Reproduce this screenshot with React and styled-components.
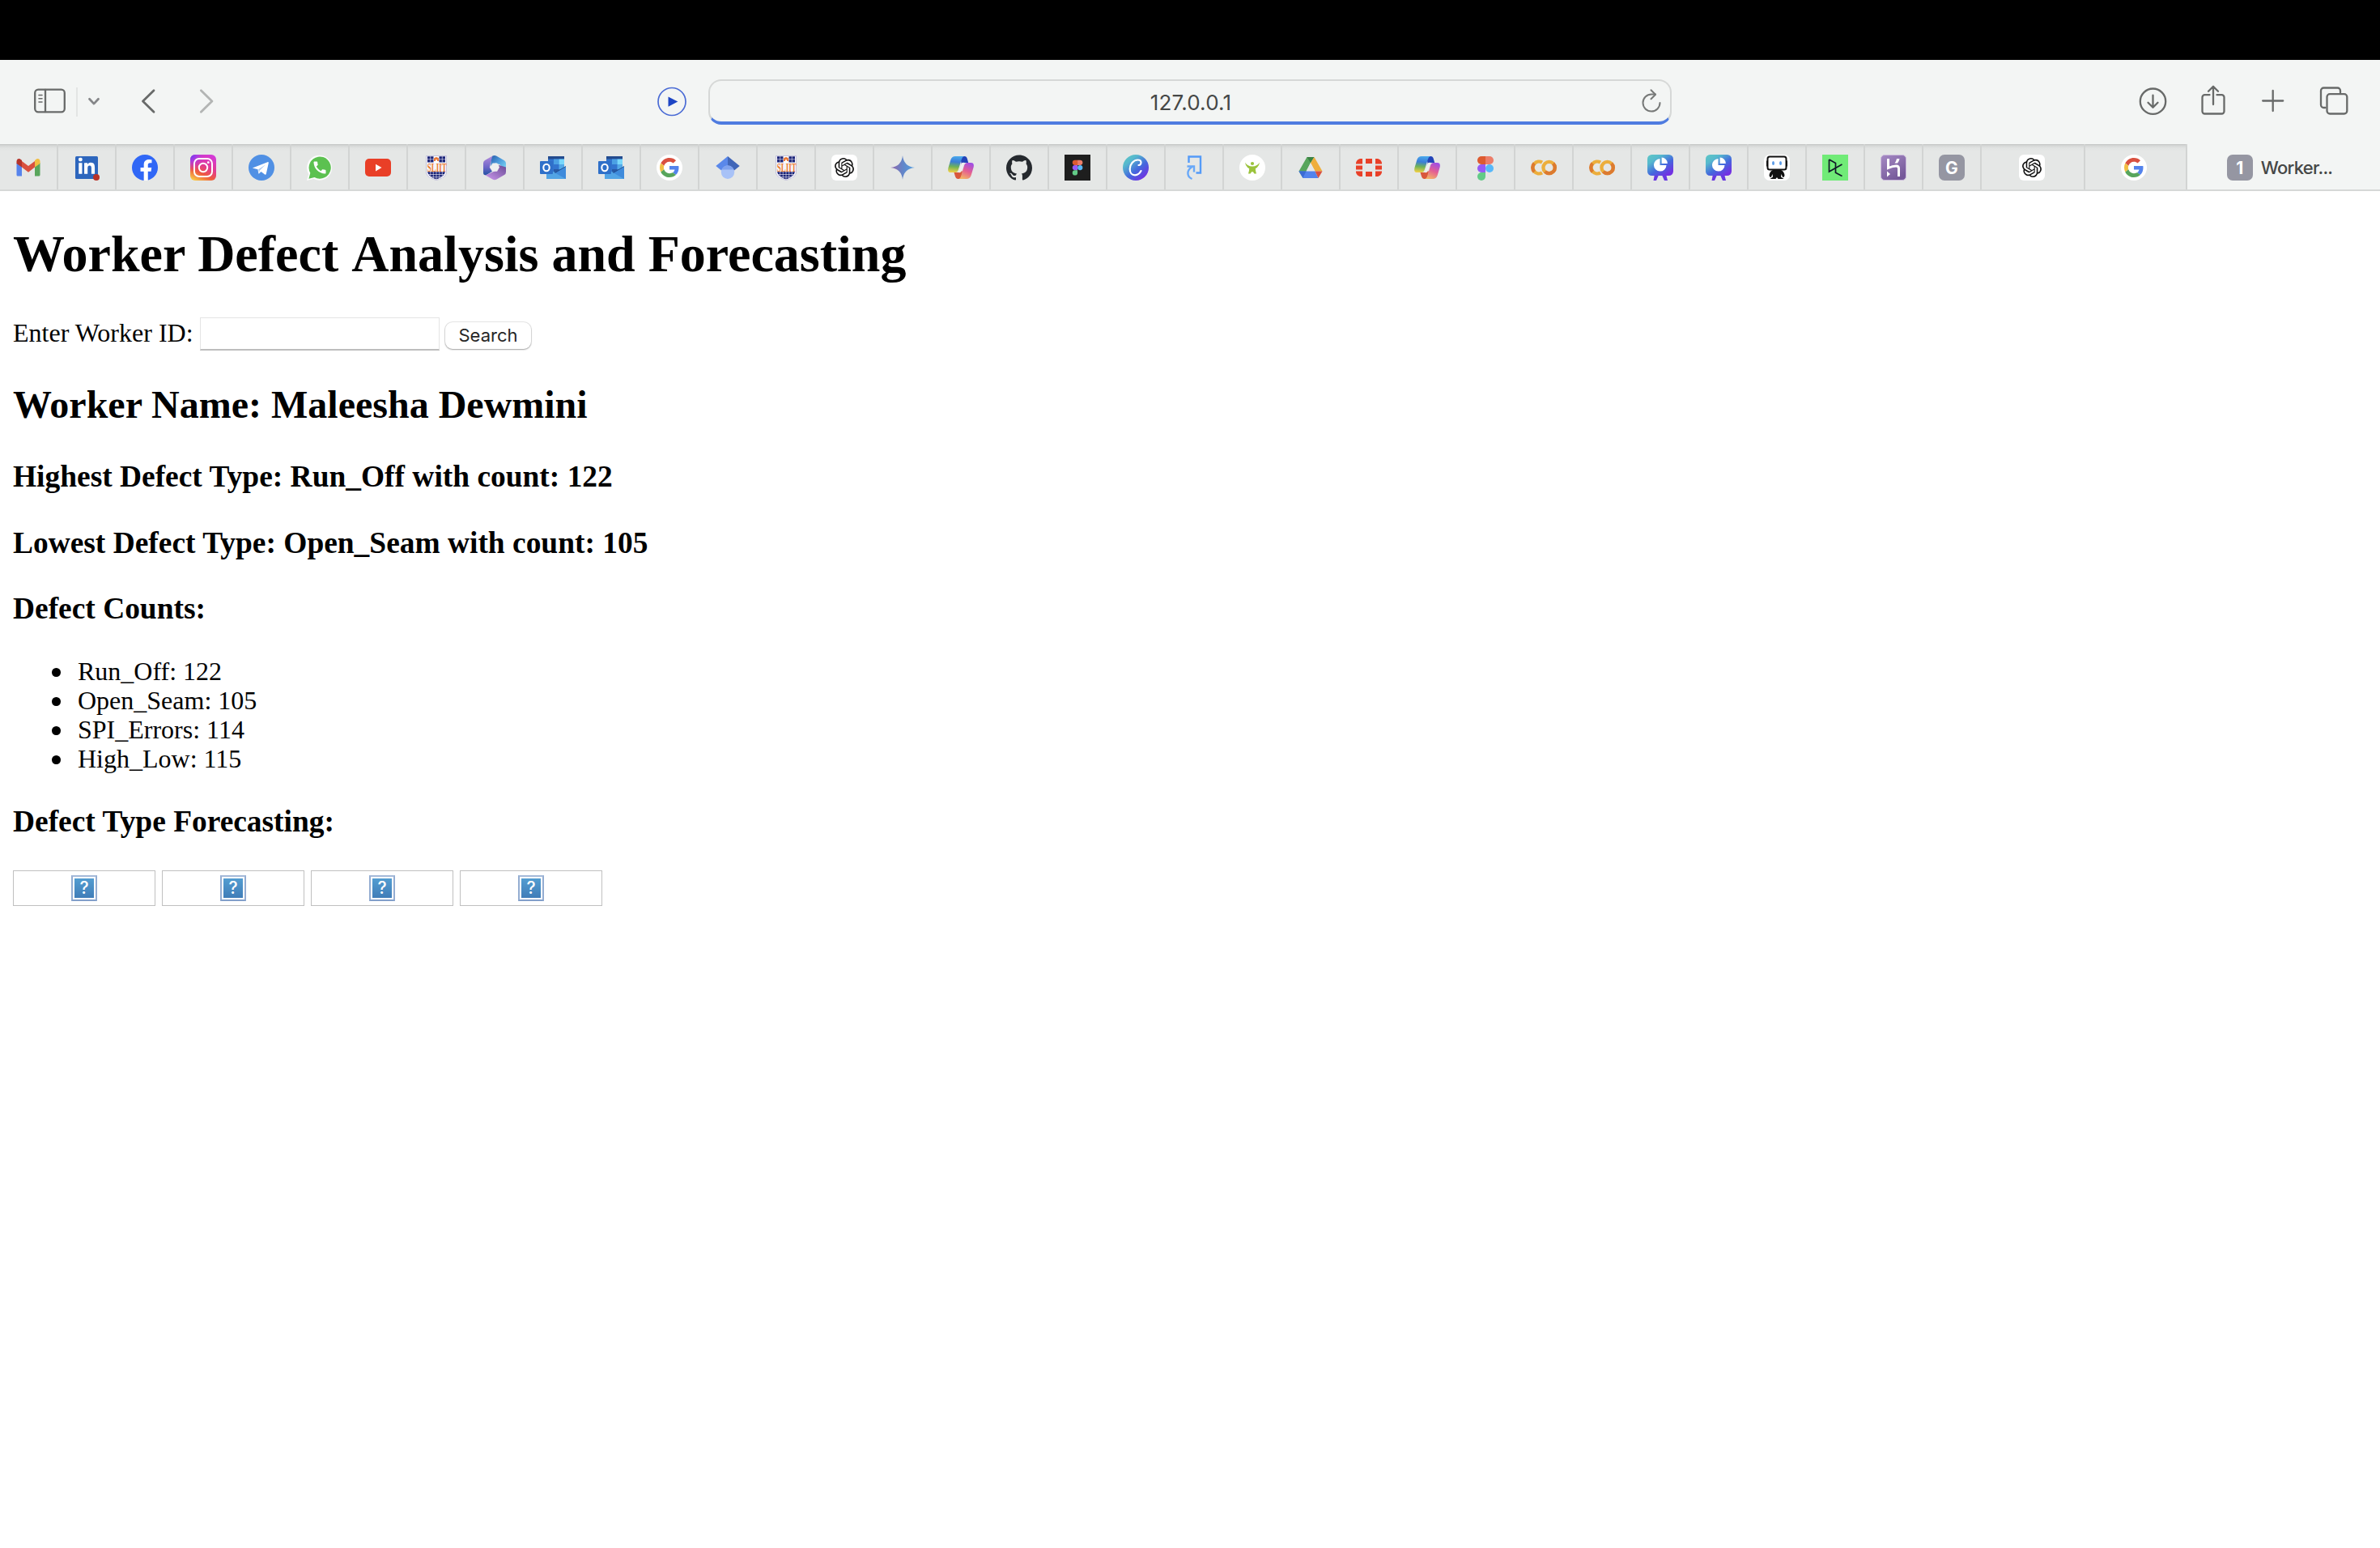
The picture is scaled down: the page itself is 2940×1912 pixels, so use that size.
import React from "react";
import styled, { createGlobalStyle } from "styled-components";
import { SiOpenai, SiGithub } from "react-icons/si";
import { FaFacebookF, FaLinkedinIn } from "react-icons/fa";
import { MdCall } from "react-icons/md";

const Global = createGlobalStyle`
  body { margin: 0; background: #fff; color: #000; font-family: "Liberation Serif", "Times New Roman", serif; }
  * { box-sizing: border-box; }
`;

/* ---------- browser chrome ---------- */
const Notch = styled.div`height: 74px; background: #000;`;
const Toolbar = styled.header`
  display: flex; align-items: center; height: 104px; background: #f3f5f4;
  padding: 0 37px 0 40px; color: #686a69;
`;
const Group = styled.div`
  display: flex; align-items: center; flex: none; width: ${(p) => p.$w}px; margin-left: ${(p) => (p.$end ? "auto" : "0")};
`;
const Slot = styled.span`
  display: flex; flex: none; width: ${(p) => p.$w}px; height: 44px; margin-left: ${(p) => p.$ml || 0}px;
  svg { display: block; }
`;
const Rule = styled.span`width: 2px; height: 36px; margin-left: 12px; background: #e3e5e4;`;
const Address = styled.div`
  display: flex; align-items: center; flex: none; width: 1190px; height: 56px; margin: 0 0 0 26px;
  border: 2px solid #d6d8d7; border-bottom: 4px solid #4f7ce0; border-radius: 16px;
  padding-right: 8px;
`;
const Host = styled.span`
  flex: 1; text-align: center; padding: 4px 0 0 38px; color: #454746;
  font: 26px/32px Inter, "Liberation Sans", sans-serif; letter-spacing: 0.2px;
`;

const TabStrip = styled.nav`
  display: flex; height: 58px; background: #e5e7e6; border-bottom: 2px solid #d6d8d7;
`;
const Tab = styled.div`
  display: flex; align-items: center; justify-content: center; flex: ${(p) => (p.$grow ? "1" : "none")};
  width: ${(p) => p.$w || 72}px; padding: 2px ${(p) => p.$pr || 0}px 0 0;
  background: ${(p) => (p.$grow ? "#f3f5f4" : "linear-gradient(#c2c4c3 0, #d6d8d7 2px, #e1e3e2 5px, #e5e7e6 9px)")};
  border-right: ${(p) => (p.$grow ? "0" : "2px solid #d2d4d3")};
  svg { display: block; }
`;
const TabTitle = styled.span`
  margin-left: 10px; color: #454746; font: 500 22px/30px Inter, "Liberation Sans", sans-serif;
  font-weight: 450; letter-spacing: -0.7px; padding-right: 10px;
`;
const Badge = styled.span`
  width: 32px; height: 32px; border-radius: 7px; background: #9596a2; color: #fff; text-align: center;
  font: 700 21px/33px Inter, "Liberation Sans", sans-serif;
`;

/* ---------- page ---------- */
const Page = styled.main`padding: 42px 16px 0;`;
const Title = styled.h1`margin: 0; font-size: 64px; line-height: 71px;`;
const Word = styled.span`margin-left: 0.1px;`;
const Form = styled.form`display: flex; height: 42px; margin: 43px 0 0;`;
const Label = styled.label`font-size: 32px; line-height: 36px; padding-top: 1px; width: 231px; white-space: nowrap;`;
const Field = styled.input`
  width: 296px; height: 41px; margin: 0; padding: 4px; border: 1px solid #e4e4e4; border-bottom: 2px solid #bdbdbd;
  background: #fff; outline: 0; border-radius: 0; font-size: 22px;
`;
const Button = styled.button`
  width: 106px; height: 33px; margin: 6px 0 0 7px; padding: 0; border: 0; border-radius: 9px; background: #fff;
  box-shadow: 0 0 0 1px rgba(0,0,0,.09), 0 1px 2px rgba(0,0,0,.3); color: #262626;
  font: 22px/33px Inter, "Liberation Sans", sans-serif;
`;
const Name = styled.h2`margin: 39px 0 42px; font-size: 48px; line-height: 53px;`;
const Heading = styled.h3`margin: 0 0 ${(p) => p.$mb || 41}px; font-size: 37.44px; line-height: 41px;`;
const List = styled.ul`margin: 0 0 39px; padding: 0 0 0 48px; list-style: none;`;
const Item = styled.li`
  display: flex; align-items: center; font-size: 32px; line-height: 36px;
  &::before { content: ""; width: 10.6px; height: 10.6px; margin: 3px 21.4px 0 0; border-radius: 50%; background: #000; }
`;
const Charts = styled.div`display: flex; gap: 8px;`;
const Missing = styled.div`
  display: flex; align-items: center; justify-content: center; width: 176px; height: 44px; border: 1px solid #c0c0c0;
`;
const Unknown = styled.span`
  width: 32px; height: 32px; border: 2px solid; padding: 2px; background: #fff;
  border-color: #a5bad9 #94add2 #829fca;
  &::before {
    content: "?"; display: block; height: 24px; background: linear-gradient(#539dd1, #407db8); color: #fff;
    text-align: center; font: 500 21px/24px Inter, "Liberation Sans", sans-serif;
  }
`;

/* ---------- favicons ---------- */
const I = ({ children }) => <svg width="32" height="32" viewBox="0 0 32 32">{children}</svg>;

const Gmail = () => (
  <I>
    <path d="M1.500 10v15a1.500 1.500 0 0 0 1.500 1.500h5V14z" fill="#5784ec" />
    <path d="M30.500 10v15a1.500 1.500 0 0 1-1.500 1.500h-5V14z" fill="#59a65c" />
    <path d="M8 8l8 6 8-6v7.500l-8 6.200-8-6.200z" fill="#d9503f" />
    <path d="M1.500 8.500c0-3.500 3.300-4.200 5.200-2.600L8 7v8.600L1.500 11z" fill="#b5342a" />
    <path d="M30.500 8.500c0-3.500-3.300-4.200-5.200-2.600L24 7v8.600L30.500 11z" fill="#f1be42" />
  </I>
);
const LinkedIn = () => (
  <I>
    <rect x="2" y="2" width="28" height="28" rx="1.500" fill="#2d66bd" />
    <FaLinkedinIn x="4.500" y="3.500" size="23" color="#fff" />
    <circle cx="28" cy="28" r="4" fill="#b93227" />
  </I>
);
const Facebook = () => (
  <I>
    <circle cx="16" cy="16" r="16" fill="#3067f6" />
    <FaFacebookF x="4.500" y="6" size="26" color="#fff" />
  </I>
);
const Instagram = () => (
  <I>
    <defs>
      <linearGradient id="ig" x1="0.200" y1="1" x2="0.700" y2="0"><stop stopColor="#f8c644" /><stop offset=".3" stopColor="#ee5b3d" /><stop offset=".6" stopColor="#e23a92" /><stop offset="1" stopColor="#d33ad6" /></linearGradient>
      <radialGradient id="ig2" cx="0" cy="0" r=".65"><stop stopColor="#5b3cf5" /><stop offset=".4" stopColor="#a13cf0" stopOpacity=".8" /><stop offset="1" stopColor="#d33ad6" stopOpacity="0" /></radialGradient>
    </defs>
    <rect width="32" height="32" rx="6" fill="url(#ig)" /><rect width="32" height="32" rx="6" fill="url(#ig2)" />
    <rect x="5" y="5" width="22" height="22" rx="6" fill="none" stroke="#fff" strokeWidth="2" />
    <circle cx="16" cy="16" r="5.200" fill="none" stroke="#fff" strokeWidth="2" /><circle cx="22.300" cy="9.700" r="1.400" fill="#fff" />
  </I>
);
const Telegram = () => (
  <I>
    <circle cx="16" cy="16" r="16" fill="#5090e4" />
    <path d="M5.500 16.200 23.500 9.200c.9-.3 1.500.2 1.200 1.500l-2.900 13.100c-.2 1-.9 1.200-1.700.7l-4.600-3.400-2.300 2.200c-.5.500-.8.300-.9-.3l-.8-4.700-5.700-1.500c-1-.3-1-.4-.3-.6z" fill="#fff" />
    <path d="M12.200 18.300 21.200 12.300 13.800 19.500 13 23z" fill="#a9c8f0" />
  </I>
);
const WhatsApp = () => (
  <I>
    <path d="M0 32 2.200 24A15.500 15.500 0 1 1 8.500 30z" fill="#fff" opacity=".85" />
    <path d="M2.400 29.800 4.300 22.700A13.600 13.600 0 1 1 9.500 27.900z" fill="#5cc150" />
    <MdCall x="6" y="6" size="20" color="#fff" />
  </I>
);
const YouTube = () => (
  <I><rect y="5" width="32" height="22" rx="5" fill="#e93f27" /><path d="M13 11.800v8.600l7.500-4.300z" fill="#fff" /></I>
);
const Sliit = () => (
  <I>
    <path d="M3.500 1.500h25V23q-2 6-12.400 8.500Q5.500 29 3.500 23z" fill="#f5f4fa" stroke="#b9b8d6" strokeWidth=".8" />
    <path d="M5 2.300h22V9.500H5zM5 21.300h22q-1.500 6.500-11 9.200Q6.500 28 5 21.300z" fill="#1a2377" />
    <path d="M8.700 2v7.500M23.300 2v7.500M5 5.700h22.500M8.700 21v9M12.300 21v10M16 21v10M19.700 21v10M23.300 21v9M5 24.500h22.500M7 27.700h18" stroke="#eeedf6" strokeWidth=".6" />
    <rect x="12.500" y="2" width="7" height="8" fill="#fff" /><path d="M13 8V4.500q3-3 6 0V8h-2V6.200h-2V8z" fill="#ea7b3a" />
    <text transform="translate(4.700 20.500) scale(.6 1)" fontFamily="Liberation Serif, serif" fontWeight="700" fontSize="15" fill="#ed7d31">SLIIT</text>
  </I>
);
const M365 = () => (
  <I>
    <defs>
      <linearGradient id="ma" x1="0" y1="0" x2="0" y2="1"><stop stopColor="#b58bdc" /><stop offset=".6" stopColor="#6d66c8" /><stop offset="1" stopColor="#2352a3" /></linearGradient>
      <linearGradient id="mb" x1="0" y1="0" x2="1" y2="1"><stop stopColor="#285daa" /><stop offset=".45" stopColor="#4c9bdc" /><stop offset="1" stopColor="#83e0f8" /></linearGradient>
      <linearGradient id="mc" x1="0" y1="1" x2="1" y2="0"><stop stopColor="#cf9cf0" /><stop offset="1" stopColor="#6a4a96" /></linearGradient>
    </defs>
    <path d="M13.500 1.500 4 7Q2 8.300 2 10.500v11.800Q2 26 6 25l7-4.200-3.200-5z" fill="url(#ma)" />
    <path d="M13.500 1.500Q16 .3 18.500 1.700L28 7.200q2 1.300 2 3.500v9L22 12l-5-1.500-5.500 4q-.5-8 2-13z" fill="url(#mb)" />
    <path d="M30 15.500v6Q30 24 28 25l-9.500 5.500Q16 31.800 13.500 30.500L3 24.500q2 1.200 4.500-.2L17 20l4.500-7z" fill="url(#mc)" />
    <path d="M13.500 10.500h5.600l2.900 5-2.900 5.200h-5.600l-2.900-5.200z" fill="#eef0f0" />
  </I>
);
const Outlook = () => (
  <I>
    <rect x="10" y="2" width="20" height="22" fill="#3274cf" /><rect x="10" y="2" width="20" height="3.500" fill="#234b8e" />
    <path d="M17 5.500h6.500V12H17z" fill="#4ba0e4" /><path d="M23.500 5.500H30V12h-6.500z" fill="#79d7fb" /><path d="M23.500 12H30v6h-6.500z" fill="#54a9e8" /><path d="M17 18h6.500v5H17z" fill="#285aa5" />
    <path d="M32 14.500V30H8V17l13 6z" fill="#52a4e5" /><path d="M32 15v15L18.500 22.500z" fill="#3f8bdb" /><path d="M32 14.500 18.500 22.500" stroke="#224f93" />
    <rect y="8" width="16" height="16" rx="1" fill="#2f70c9" /><ellipse cx="8" cy="16" rx="3.700" ry="4.300" fill="none" stroke="#fff" strokeWidth="2.100" />
  </I>
);
const Google = () => (
  <I>
    <circle cx="16" cy="16" r="16" fill="#fff" />
    <svg x="4" y="4" width="24" height="24" viewBox="0 0 48 48">
      <path fill="#d9503f" d="M24 9.500c3.540 0 6.710 1.220 9.210 3.600l6.850-6.850C35.900 2.380 30.470 0 24 0 14.620 0 6.510 5.380 2.560 13.220l7.980 6.190C12.430 13.720 17.740 9.500 24 9.500z" />
      <path fill="#5383ec" d="M46.980 24.550c0-1.570-.15-3.090-.38-4.550H24v9.020h12.940c-.58 2.960-2.260 5.480-4.780 7.180l7.730 6c4.510-4.180 7.090-10.360 7.090-17.650z" />
      <path fill="#f1be42" d="M10.530 28.590c-.48-1.450-.76-2.990-.76-4.590s.27-3.140.76-4.590l-7.980-6.190C.92 16.460 0 20.120 0 24c0 3.880.92 7.540 2.560 10.780l7.970-6.190z" />
      <path fill="#58a55c" d="M24 48c6.480 0 11.930-2.130 15.890-5.810l-7.730-6c-2.150 1.450-4.920 2.300-8.160 2.300-6.260 0-11.570-4.220-13.470-9.910l-7.980 6.190C6.510 42.620 14.620 48 24 48z" />
    </svg>
  </I>
);
const Scholar = () => (
  <I>
    <path d="M16 2 1.300 14 8 19.500h8z" fill="#5a88ea" /><path d="M16 2 30.700 14 24 19.500h-8z" fill="#4166b8" />
    <circle cx="16" cy="21.800" r="8.200" fill="#a8c2f7" /><path d="M8.500 18.500a8.200 8.200 0 0 1 15 0z" fill="#7fa2ee" />
  </I>
);
const ChatGPT = () => (
  <I><rect width="32" height="32" rx="6" fill="#fff" /><SiOpenai x="4" y="4" size="24" color="#111" /></I>
);
const Gemini = () => (
  <I>
    <defs><linearGradient id="ge"><stop offset=".1" stopColor="#8a6bb0" /><stop offset=".5" stopColor="#6385c8" /><stop offset="1" stopColor="#53a0e2" /></linearGradient></defs>
    <path d="M16 1q1.300 13.500 15 15-13.700 1.500-15 15-1.300-13.500-15-15Q14.700 14.500 16 1z" fill="url(#ge)" />
  </I>
);
const Copilot = () => (
  <I>
    <defs>
      <linearGradient id="ca" x1=".5" y1="0" x2=".4" y2="1"><stop stopColor="#4aa9ec" /><stop offset=".35" stopColor="#3a7dd8" /><stop offset=".65" stopColor="#6fb257" /><stop offset="1" stopColor="#efd047" /></linearGradient>
      <linearGradient id="cb" x1=".7" y1="0" x2=".3" y2="1"><stop stopColor="#a04ee4" /><stop offset=".5" stopColor="#e45f92" /><stop offset="1" stopColor="#f3b465" /></linearGradient>
    </defs>
    <path d="M15 2h5.500q2.500 0 3.300 3l1.400 5h-4.500q-2.500 0-3.700 3z" fill="#2243b8" />
    <path d="M9 2h11q-2.300.5-3.200 4l-4 12.500Q11.700 22 9 22H3.500Q-1 22 .5 16l3-10Q5 2 9 2z" fill="url(#ca)" />
    <path d="M7.500 22H13q2 0 3-3l2 2-2 9h-3.500Q10 30 9 27z" fill="#d9583c" />
    <path d="M23 30H13q2.500-.5 3.300-4l3.700-12.500Q21 10 24 10h4.500Q33 10 31.500 16l-3 10Q27 30 23 30z" fill="url(#cb)" />
    <path d="M17 10.200q1.500-.9 4-.2-1.500 1-2 3.200L16.500 21q-.8 1.500-3.800 1 .8-1 1.300-2.500z" fill="#edf0ef" />
  </I>
);
const GitHub = () => <I><SiGithub size="32" color="#25292e" /></I>;
const FigmaShape = () => (
  <>
    <path d="M16 1H11a5 5 0 0 0 0 10h5z" fill="#dd5b30" /><path d="M16 1h5a5 5 0 0 1 0 10h-5z" fill="#ec7d69" />
    <path d="M16 11h-5a5 5 0 0 0 0 10h5z" fill="#955bf6" /><circle cx="21" cy="16" r="5" fill="#58b8f9" />
    <path d="M11 21h5v5a5 5 0 1 1-5-5z" fill="#62cb87" />
  </>
);
const Figma = () => <I><g transform="translate(0 1)"><FigmaShape /></g></I>;
const FigmaDark = () => <I><rect width="32" height="32" fill="#1e1e1e" /><g transform="translate(6 6) scale(.63)"><FigmaShape /></g></I>;
const CanvaFill = ({ id }) => (
  <defs><linearGradient id={id} x1=".1" y1=".1" x2=".8" y2=".95"><stop stopColor="#5bc2c8" /><stop offset=".2" stopColor="#56b9cd" /><stop offset=".6" stopColor="#4468dd" /><stop offset="1" stopColor="#7330e2" /></linearGradient></defs>
);
const Canva = () => (
  <I>
    <CanvaFill id="cv" /><circle cx="16" cy="16" r="16" fill="url(#cv)" />
    <path d="M19.500 13c2 .2 3-1.700 3-3.300 0-2-1.500-3.200-4-3.200-5.500 0-9.800 5.500-9.800 11.200 0 4.600 2.600 7.600 6.300 7.600 3.300 0 6-2.200 7.500-5.200" fill="none" stroke="#fff" strokeWidth="2.200" strokeLinecap="round" />
  </I>
);
const Redirect = () => (
  <I>
    <g transform="translate(4 0)" fill="none">
      <path d="M5.500 10V2.500h14.500v20H14.500" stroke="#549bf8" strokeWidth="2.400" />
      <path d="M9.500 30q-6-2.500-5-8.500.8-4 6.500-7.500M3.500 14.500h8.500V21.500" stroke="#68a8f8" strokeWidth="2.400" />
    </g>
  </I>
);
const Person = () => (
  <I>
    <circle cx="16" cy="16" r="16" fill="#fff" /><circle cx="16" cy="11" r="2.100" fill="#9bc33c" />
    <path d="M7 9.800q3.500 5 9 4.800 5.500.2 9-4.800l-1 3.200q-2 3.500-4.200 4.300 0 2.700 1.200 6.200h-2.600q-1-2.500-2.400-2.500T13.600 23.500H11q1.200-3.500 1.200-6.200Q10 16.500 8 13z" fill="#9bc33c" />
  </I>
);
const Drive = () => (
  <I>
    <path d="M11.500 3H20l-4 6.800L6.500 29 1.500 20.500z" fill="#58a55c" /><path d="M11.500 3h9L16 10.300z" fill="#3a8243" />
    <path d="M20.500 3 30.500 20.500h-9L16 10.300z" fill="#efae3c" />
    <path d="M16 10.300 21.500 20.500h-11z" fill="#e5e7e6" />
    <path d="M1.500 20.500h20L25.500 29h-19z" fill="#5383ec" /><path d="M1.500 20.500h9L6.500 28.500z" fill="#3b6bd4" />
    <path d="M21.500 20.500h9L25.500 29z" fill="#d9503f" />
  </I>
);
const Fortinet = () => (
  <I>
    <path d="M0 10q1-4 5-5h3v6.500H0zM32 10q-1-4-5-5h-3v6.500h8zM0 22q1 4 5 5h3v-6.500H0zM32 22q-1 4-5 5h-3v-6.500h8zM12 5h8v6h-8zM12 21h8v6h-8zM0 13.500h8v5H0zM24 13.500h8v5h-8z" fill="#e94028" />
  </I>
);
const Colab = () => (
  <I>
    <g fill="none" strokeWidth="4.300">
      <path d="M14 9.700A7.400 7.400 0 1 0 14 22.300" stroke="#ecae3c" />
      <path d="M4.300 10.800a7.400 7.400 0 0 0 0 10.400" stroke="#dc7a30" />
      <circle cx="22.600" cy="16" r="7.200" stroke="#ecae3c" />
      <path d="M27.700 10.900A7.200 7.200 0 0 1 17.500 21.100" stroke="#dc7a30" />
    </g>
  </I>
);
const Present = () => (
  <I>
    <CanvaFill id="pr" />
    <path d="M9 24h5.500l-3.500 8H7.500zM17.500 24H23l2 8h-4z" fill="#6838e0" />
    <rect width="32" height="26" rx="5.500" fill="url(#pr)" />
    <path d="M15.500 5v8h8A7.800 7.800 0 1 1 15.500 5z" fill="#fff" /><path d="M17.600 3.600a7.300 7.300 0 0 1 7.300 7.300h-7.300z" fill="#fff" />
  </I>
);
const Robot = () => (
  <I>
    <rect width="32" height="32" rx="7" fill="#fff" /><rect x="4.500" y="2.500" width="23" height="16" rx="2.500" fill="#fff" stroke="#111" strokeWidth="2" />
    <path d="M3 7.500h1.500v7H3zM27.500 7.500H29v7h-1.500z" fill="#111" /><ellipse cx="11.500" cy="10.500" rx="1.500" ry="2.500" fill="#5b9ce8" /><ellipse cx="20.500" cy="10.500" rx="1.500" ry="2.500" fill="#5b9ce8" />
    <path d="M11 19h10q4 1.500 4.500 7-1.200 3-2.500 1.500L21.500 24l-.5 3.500 3.500 2.500h-7L16 28l-1.500 2h-7l3.500-2.500-.5-3.500L9 27.500Q7.700 29 6.500 26 7 20.500 11 19z" fill="#111" />
  </I>
);
const DataCamp = () => (
  <I><rect width="32" height="32" fill="#70eb77" /><path d="M8.500 6v15L24.500 12M8.500 6l8 4.500v11.800l8 4.200" fill="none" stroke="#101828" strokeWidth="1.700" /></I>
);
const Heroku = () => (
  <I>
    <defs><linearGradient id="he" x1="0" y1="0" x2=".6" y2="1"><stop stopColor="#a58ac4" /><stop offset="1" stopColor="#755899" /></linearGradient></defs>
    <rect x=".5" y=".5" width="31" height="31" rx="4.500" fill="url(#he)" stroke="#cbbbdb" strokeWidth="1" />
    <path d="M9.500 5v11.500q5.500-2.500 10-2.500 3 0 3 3V27" fill="none" stroke="#fff" strokeWidth="3" /><path d="M8 20.500v7l4-3.500zM20 5h3.500q-.5 3-2.500 5.500h-3.500Q19.500 8 20 5z" fill="#fff" />
  </I>
);
const GBadge = () => <Badge>G</Badge>;

const tabs = [
  Gmail, LinkedIn, Facebook, Instagram, Telegram, WhatsApp, YouTube, Sliit, M365, Outlook, Outlook, Google,
  Scholar, Sliit, ChatGPT, Gemini, Copilot, GitHub, FigmaDark, Canva, Redirect, Person, Drive, Fortinet,
  Copilot, Figma, Colab, Colab, Present, Present, Robot, DataCamp, Heroku, GBadge,
];

const Draw = ({ w, sw = 2.3, children }) => (
  <svg width={w} height="44" viewBox={`0 0 ${w} 44`} fill="none" stroke="currentColor" strokeWidth={sw} strokeLinecap="round" strokeLinejoin="round">{children}</svg>
);

const counts = [["Run_Off", 122], ["Open_Seam", 105], ["SPI_Errors", 114], ["High_Low", 115]];

export default function App() {
  return (
    <>
      <Global />
      <Notch />
      <Toolbar>
        <Group $w={809}>
          <Slot $w={42}><Draw w={42}><rect x="3.200" y="6.700" width="36.600" height="27.600" rx="4" /><path d="M16 7v27" /><path d="M8 13.500h4M8 17.700h4M8 22h4" strokeWidth="1.600" /></Draw></Slot>
          <Rule />
          <Slot $w={18} $ml={11}><Draw w={18} sw={2.8}><path d="m3.500 18.300 5.500 5.800 5.500-5.800" stroke="#858689" /></Draw></Slot>
          <Slot $w={20} $ml={48}><Draw w={20} sw={2.8}><path d="M17 7.700 3.500 21 17 34.300" /></Draw></Slot>
          <Slot $w={20} $ml={52}><Draw w={20} sw={2.8}><path d="m3.400 7.700 13.500 13.300L3.400 34.300" stroke="#b3b5b4" /></Draw></Slot>
          <Slot $w={38} $ml={546}><Draw w={38} sw={1.7}><circle cx="19" cy="21.500" r="17" stroke="#4a6bd5" /><path d="M14.500 15.500v12.200l11.800-6.100z" fill="#1d45c4" stroke="none" /></Draw></Slot>
        </Group>
        <Address>
          <Host>127.0.0.1</Host>
          <Slot $w={28}><Draw w={28} sw={2}><path d="M23.500 24a10.500 10.500 0 1 1-10.500-10.500h5" stroke="#777978" /><path d="m12.500 8.300 5.500 5.500-5.500 5.500" stroke="#777978" /></Draw></Slot>
        </Address>
        <Group $w={262} $end>
          <Slot $w={38}><Draw w={38}><circle cx="18.500" cy="21.200" r="15.700" /><path d="M18.500 13.700v14.800M12.500 22.700l6 6 6-6" /></Draw></Slot>
          <Slot $w={34} $ml={39}><Draw w={34}><path d="M11.500 13.200H5.500a3 3 0 0 0-3 3V33.500a3 3 0 0 0 3 3H26.500a3 3 0 0 0 3-3V16.200a3 3 0 0 0-3-3H20.500M16 25V3M10 8.700 16 2.700l6 6" /></Draw></Slot>
          <Slot $w={30} $ml={42}><Draw w={30}><path d="M1.200 20.500h25M13.700 8v25" /></Draw></Slot>
          <Slot $w={38} $ml={41}><Draw w={38}><path d="M7.500 29H5.500a3.500 3.500 0 0 1-3.500-3.500V8A3.500 3.500 0 0 1 5.500 4.500H22.500A3.500 3.500 0 0 1 26 8V10.500" /><rect x="9.500" y="12.200" width="24.800" height="24.300" rx="3.500" /></Draw></Slot>
        </Group>
      </Toolbar>
      <TabStrip>
        {tabs.map((Icon, i) => <Tab key={i}><Icon /></Tab>)}
        <Tab $w={128} $pr={2}><ChatGPT /></Tab>
        <Tab $w={126} $pr={4}><Google /></Tab>
        <Tab $grow><Badge>1</Badge><TabTitle>Worker...</TabTitle></Tab>
      </TabStrip>
      <Page>
        <Title>Worker Defect <Word>Analysis and Forecasting</Word></Title>
        <Form onSubmit={(e) => e.preventDefault()}>
          <Label htmlFor="worker">Enter Worker ID:</Label>
          <Field id="worker" />
          <Button type="submit">Search</Button>
        </Form>
        <Name>Worker Name: Maleesha Dewmini</Name>
        <Heading>Highest Defect Type: Run_Off with count: 122</Heading>
        <Heading $mb={40}>Lowest Defect Type: Open_Seam with count: 105</Heading>
        <Heading $mb={39}>Defect Counts:</Heading>
        <List>{counts.map(([k, n]) => <Item key={k}>{k}: {n}</Item>)}</List>
        <Heading $mb={40}>Defect Type Forecasting:</Heading>
        <Charts>{counts.map(([k]) => <Missing key={k}><Unknown /></Missing>)}</Charts>
      </Page>
    </>
  );
}
